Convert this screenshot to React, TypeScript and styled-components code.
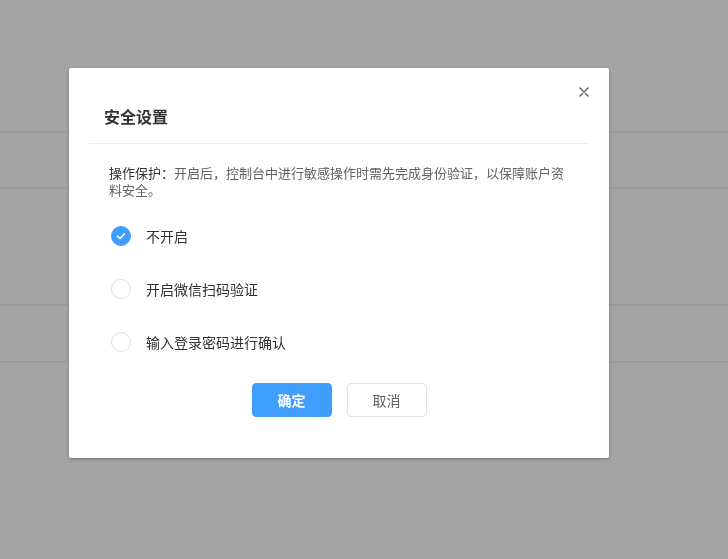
import React, { useState } from 'react';
import styled, { createGlobalStyle } from 'styled-components';

const GlobalStyle = createGlobalStyle`
  html, body {
    margin: 0;
    padding: 0;
    height: 100%;
    background: #ffffff;
    font-family: "Noto Sans CJK SC", "Noto Sans", "Liberation Sans", sans-serif;
  }
  #root {
    height: 100%;
  }
`;

const Page = styled.div`
  height: 100%;
  display: flex;
  flex-direction: column;
`;

const Band = styled.div<{ $height: number }>`
  height: ${(p) => p.$height}px;
  flex-shrink: 0;
  border-bottom: 1px solid #eeeeee;
  box-shadow: 0 1px 2px rgba(0, 0, 0, 0.04);
`;

const Overlay = styled.div`
  position: fixed;
  inset: 0;
  background: rgba(0, 0, 0, 0.36);
  display: flex;
  align-items: flex-start;
  padding: 68px 0 0 69px;
`;

const Dialog = styled.div`
  position: relative;
  width: 540px;
  height: 390px;
  background: #ffffff;
  border-radius: 2px;
  box-shadow: 0 1px 3px rgba(0, 0, 0, 0.3);
  display: flex;
  flex-direction: column;
`;

const Header = styled.div`
  padding: 36px 35px 15px;
`;

const Title = styled.h2`
  margin: 0;
  font-size: 16px;
  line-height: 24px;
  font-weight: 600;
  color: #303133;
`;

const Divider = styled.div`
  height: 1px;
  margin: 0 20px;
  background: #ebeef5;
`;

const CloseButton = styled.button`
  position: absolute;
  top: 16px;
  right: 17px;
  width: 16px;
  height: 16px;
  padding: 0;
  border: none;
  background: transparent;
  cursor: pointer;
  display: flex;
  align-items: center;
  justify-content: center;
  color: #606266;

  svg {
    width: 10px;
    height: 10px;
  }
`;

const Body = styled.div`
  padding: 20px 40px 0;
  display: flex;
  flex-direction: column;
`;

const Description = styled.p`
  margin: 0;
  font-size: 13px;
  line-height: 17px;
  color: #606266;

  strong {
    font-weight: 400;
    color: #303133;
  }
`;

const Options = styled.div`
  margin-top: 28px;
  display: flex;
  flex-direction: column;
  gap: 33px;
`;

const Option = styled.label`
  display: flex;
  align-items: center;
  gap: 15px;
  padding-left: 2px;
  height: 20px;
  cursor: pointer;
  font-size: 14px;
  color: #303133;
`;

const Circle = styled.span<{ $checked: boolean }>`
  width: 20px;
  height: 20px;
  box-sizing: border-box;
  border-radius: 50%;
  border: 1px solid ${(p) => (p.$checked ? '#409eff' : '#dcdfe6')};
  background: ${(p) => (p.$checked ? '#409eff' : '#ffffff')};
  display: flex;
  align-items: center;
  justify-content: center;

  svg {
    width: 12px;
    height: 12px;
  }
`;

const Footer = styled.div`
  margin-top: 31px;
  display: flex;
  justify-content: center;
  gap: 15px;
`;

const Button = styled.button<{ $primary?: boolean }>`
  width: 80px;
  height: 34px;
  box-sizing: border-box;
  border-radius: 4px;
  border: 1px solid ${(p) => (p.$primary ? '#409eff' : '#dcdfe6')};
  background: ${(p) => (p.$primary ? '#409eff' : '#ffffff')};
  color: ${(p) => (p.$primary ? '#ffffff' : '#606266')};
  font-family: inherit;
  font-size: 14px;
  font-weight: ${(p) => (p.$primary ? 600 : 400)};
  cursor: pointer;
`;

const OPTIONS = ['不开启', '开启微信扫码验证', '输入登录密码进行确认'];

export default function App() {
  const [selected, setSelected] = useState(0);

  return (
    <>
      <GlobalStyle />
      <Page>
        <Band $height={131} />
        <Band $height={55} />
        <Band $height={116} />
        <Band $height={56} />
      </Page>
      <Overlay>
        <Dialog>
          <CloseButton type="button" aria-label="关闭">
            <svg viewBox="0 0 10 10" fill="none" stroke="currentColor" strokeWidth="1.4" strokeLinecap="round">
              <path d="M1 1L9 9M9 1L1 9" />
            </svg>
          </CloseButton>
          <Header>
            <Title>安全设置</Title>
          </Header>
          <Divider />
          <Body>
            <Description>
              <strong>操作保护：</strong>开启后，控制台中进行敏感操作时需先完成身份验证，以保障账户资料安全。
            </Description>
            <Options>
              {OPTIONS.map((label, i) => (
                <Option key={label} onClick={() => setSelected(i)}>
                  <Circle $checked={selected === i}>
                    {selected === i && (
                      <svg viewBox="0 0 12 12" fill="none" stroke="#ffffff" strokeWidth="1.6" strokeLinecap="round" strokeLinejoin="round">
                        <path d="M2.5 6.2L5 8.5L9.5 3.8" />
                      </svg>
                    )}
                  </Circle>
                  {label}
                </Option>
              ))}
            </Options>
          </Body>
          <Footer>
            <Button type="button" $primary>
              确定
            </Button>
            <Button type="button">取消</Button>
          </Footer>
        </Dialog>
      </Overlay>
    </>
  );
}
